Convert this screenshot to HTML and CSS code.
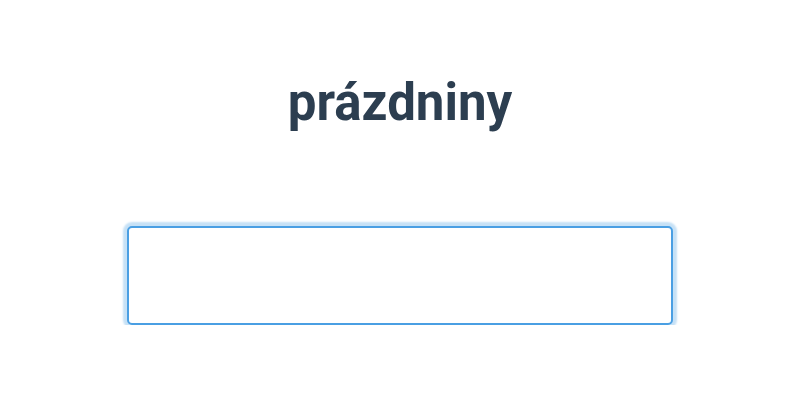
FILE: index.html
```html
<!DOCTYPE html>
<html lang="cs">
<head>
<meta charset="utf-8">
<link rel="stylesheet" href="styles.css">
</head>
<body>
<main class="page">
  <h1 class="word">prázdniny</h1>
  <input class="answer" type="text" aria-label="odpověď">
</main>
</body>
</html>
```
FILE: styles.css
```css
html, body {
  margin: 0;
  padding: 0;
  background: #ffffff;
}
.page {
  display: flex;
  flex-direction: column;
  align-items: center;
  padding-top: 73px;
  font-family: Roboto, "Liberation Sans", sans-serif;
}
.word {
  margin: 0;
  font-size: 51px;
  line-height: 60px;
  font-weight: 700;
  color: #2c3e50;
}
.answer {
  box-sizing: border-box;
  margin-top: 93px;
  width: 546px;
  height: 99px;
  border: 2px solid #4a9fe3;
  border-radius: 5px;
  box-shadow: 0 0 2px 4px #c6e1f6;
  outline: none;
  background: #fff;
  font-family: inherit;
  font-size: 24px;
}
```
